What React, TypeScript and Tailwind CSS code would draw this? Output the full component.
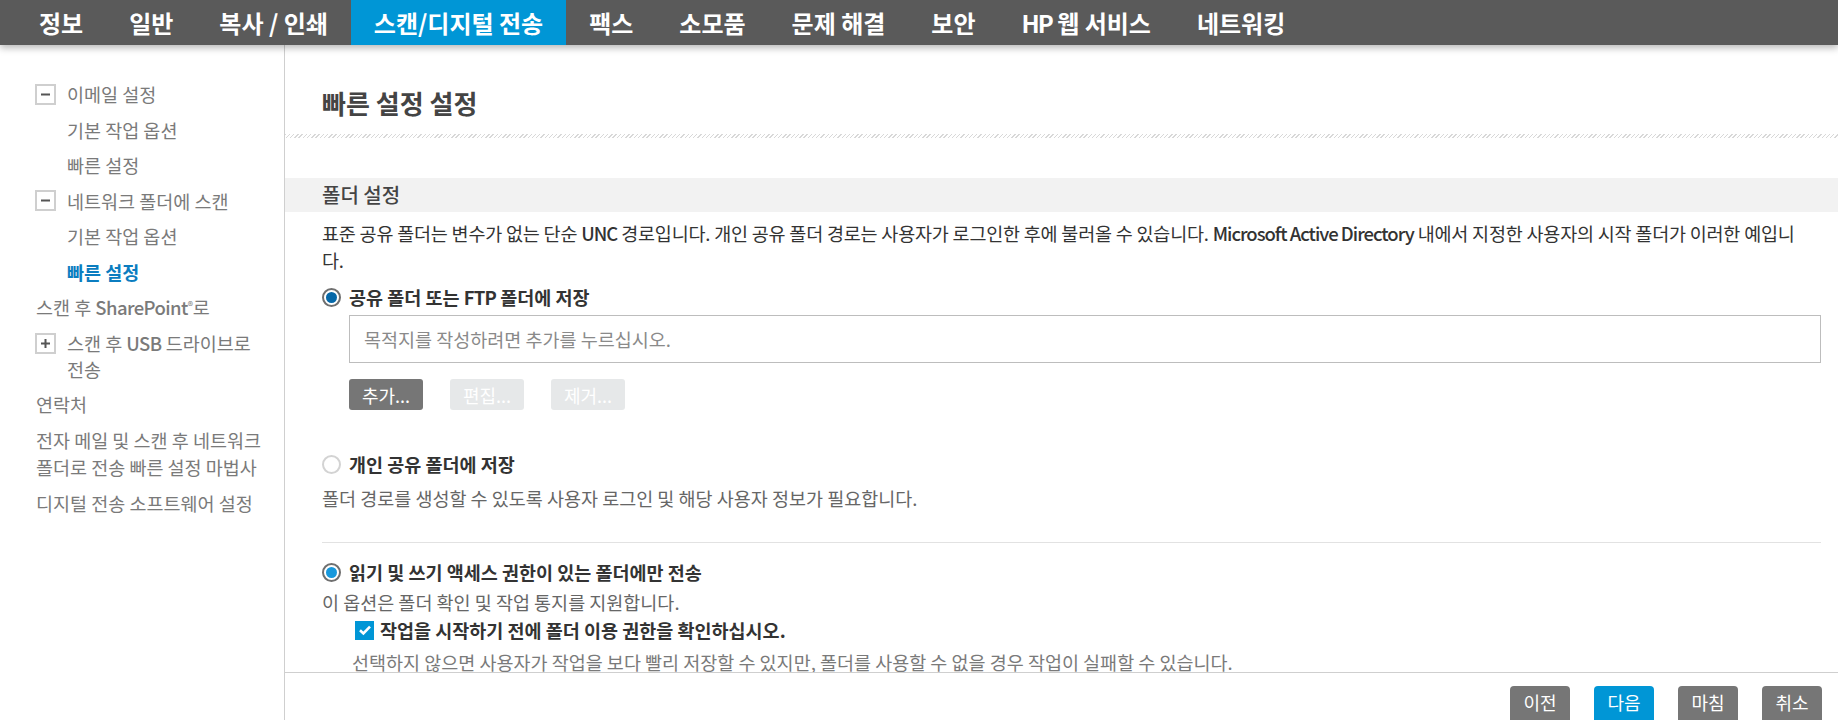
const navTabs = [
  "정보",
  "일반",
  "복사 / 인쇄",
  "스캔/디지털 전송",
  "팩스",
  "소모품",
  "문제 해결",
  "보안",
  "HP 웹 서비스",
  "네트워킹",
]

function Box({ plus }: { plus?: boolean }) {
  return (
    <span className="flex h-[21px] w-[21px] shrink-0 items-center justify-center border-2 border-[#cfcfcf] bg-white">
      <svg width="11" height="11" viewBox="0 0 11 11">
        <rect x="1" y="4.5" width="9" height="2" fill="#555" />
        {plus && <rect x="4.5" y="1" width="2" height="9" fill="#555" />}
      </svg>
    </span>
  )
}

function Radio({ checked, dot }: { checked?: boolean; dot?: string }) {
  if (!checked) {
    return <span className="h-[19px] w-[19px] shrink-0 rounded-full border-2 border-[#d3d3d3] bg-white" />
  }
  return (
    <span className="flex h-[19px] w-[19px] shrink-0 items-center justify-center rounded-full border-2 border-[#6f6f6f] bg-white">
      <span className={"h-[11px] w-[11px] rounded-full " + dot} />
    </span>
  )
}

function Sidebar() {
  return (
    <aside className="flex w-[285px] shrink-0 flex-col gap-[9.5px] border-r border-[#cfcfcf] pt-[36px] pl-[35px] pr-[12px] text-[18.5px] leading-[26px] break-keep text-[#7a7a7a]">
      <div className="flex items-center gap-[11px]">
        <Box />
        <span>이메일 설정</span>
      </div>
      <div className="pl-[32px]">기본 작업 옵션</div>
      <div className="pl-[32px]">빠른 설정</div>
      <div className="flex items-center gap-[11px]">
        <Box />
        <span>네트워크 폴더에 스캔</span>
      </div>
      <div className="pl-[32px]">기본 작업 옵션</div>
      <div className="pl-[32px] font-bold text-[#0b7dc0]">빠른 설정</div>
      <div className="pl-[1px]">
        스캔 후 <span className="font-medium tracking-[-0.6px]">SharePoint</span>
        <span className="align-[5px] text-[11px] leading-none">®</span>로
      </div>
      <div className="flex items-start gap-[11px]">
        <span className="pt-[3px]">
          <Box plus />
        </span>
        <span>
          스캔 후 <span className="font-medium tracking-[-0.6px]">USB</span> 드라이브로 전송
        </span>
      </div>
      <div className="pl-[1px]">연락처</div>
      <div className="pl-[1px] leading-[27px]">전자 메일 및 스캔 후 네트워크 폴더로 전송 빠른 설정 마법사</div>
      <div className="pl-[1px]">디지털 전송 소프트웨어 설정</div>
    </aside>
  )
}

function Main() {
  return (
    <main className="flex min-w-0 flex-1 flex-col">
      <div className="min-h-0 flex-1 overflow-hidden">
        <h1 className="pt-[42px] pl-[37px] text-[26px] font-bold leading-[32px] text-[#444]">빠른 설정 설정</h1>
        <div className="mt-[15px] h-[4px] bg-[repeating-linear-gradient(135deg,#d8d8d8_0px,#d8d8d8_1px,transparent_1px,transparent_3px)]" />
        <div className="mt-[40px] flex h-[34px] items-center bg-[#f2f2f2] pl-[37px] text-[20px] font-medium text-[#444]">
          폴더 설정
        </div>
        <div className="pl-[37px] pr-[17px] text-[18.5px] leading-[26px]">
          <p className="mt-[8px] mr-[12px] leading-[27px] tracking-[-0.2px] text-[#333]">
            표준 공유 폴더는 변수가 없는 단순 <span className="font-medium tracking-[-1px]">UNC</span> 경로입니다. 개인 공유
            폴더 경로는 사용자가 로그인한 후에 불러올 수 있습니다.{" "}
            <span className="font-medium tracking-[-1px]">Microsoft Active Directory</span> 내에서 지정한 사용자의 시작
            폴더가 이러한 예입니다.
          </p>
          <label className="mt-[10px] flex items-center gap-[8px] font-bold text-[#333]">
            <Radio checked dot="bg-[#0668a8]" />
            <span>
              공유 폴더 또는 <span className="tracking-[-0.8px]">FTP</span> 폴더에 저장
            </span>
          </label>
          <div className="mt-[5px] ml-[27px] flex h-[48px] items-center border border-[#bdbdbd] pl-[14px] text-[#8a8a8a]">
            목적지를 작성하려면 추가를 누르십시오.
          </div>
          <div className="mt-[16px] ml-[27px] flex gap-[27px] text-[18px]">
            <button className="flex h-[31px] w-[74px] items-center justify-center rounded-[3px] bg-[#767676] text-white">
              추가...
            </button>
            <button className="flex h-[31px] w-[74px] items-center justify-center rounded-[3px] bg-[#e6e8e9] text-white">
              편집...
            </button>
            <button className="flex h-[31px] w-[74px] items-center justify-center rounded-[3px] bg-[#e6e8e9] text-white">
              제거...
            </button>
          </div>
          <label className="mt-[41px] flex items-center gap-[8px] font-bold text-[#333]">
            <Radio />
            <span>개인 공유 폴더에 저장</span>
          </label>
          <p className="mt-[8px] text-[#666]">폴더 경로를 생성할 수 있도록 사용자 로그인 및 해당 사용자 정보가 필요합니다.</p>
          <div className="mt-[31px] h-px bg-[#e2e2e2]" />
          <label className="mt-[16px] flex items-center gap-[8px] font-bold text-[#333]">
            <Radio checked dot="bg-[#1798dc]" />
            <span>읽기 및 쓰기 액세스 권한이 있는 폴더에만 전송</span>
          </label>
          <p className="mt-[4px] text-[#666]">이 옵션은 폴더 확인 및 작업 통지를 지원합니다.</p>
          <label className="mt-[2px] ml-[33px] flex items-center gap-[6px] font-bold text-[#333]">
            <span className="flex h-[19px] w-[19px] shrink-0 items-center justify-center bg-[#0096d6]">
              <svg width="14" height="14" viewBox="0 0 14 14">
                <path d="M2 7.2 L5.4 10.4 L12 3.6" fill="none" stroke="#fff" strokeWidth="2.6" />
              </svg>
            </span>
            <span>작업을 시작하기 전에 폴더 이용 권한을 확인하십시오.</span>
          </label>
          <p className="mt-[6px] pl-[30px] text-[#7a7a7a]">
            선택하지 않으면 사용자가 작업을 보다 빨리 저장할 수 있지만, 폴더를 사용할 수 없을 경우 작업이 실패할 수 있습니다.
          </p>
        </div>
      </div>
      <footer className="flex h-[48px] shrink-0 justify-end gap-[24px] overflow-hidden border-t border-[#cfcfcf] pt-[13px] pr-[16px] text-[18px] text-white">
        <button className="h-[36px] w-[60px] shrink-0 rounded-t-[4px] bg-[#767676] pb-[4px]">이전</button>
        <button className="h-[36px] w-[60px] shrink-0 rounded-t-[4px] bg-[#0096d6] pb-[4px]">다음</button>
        <button className="h-[36px] w-[60px] shrink-0 rounded-t-[4px] bg-[#767676] pb-[4px]">마침</button>
        <button className="h-[36px] w-[60px] shrink-0 rounded-t-[4px] bg-[#767676] pb-[4px]">취소</button>
      </footer>
    </main>
  )
}

export default function App() {
  return (
    <div className="flex h-screen flex-col overflow-hidden bg-white font-['Noto_Sans_CJK_KR','Noto_Sans',sans-serif]">
      <nav className="relative z-10 flex h-[45px] shrink-0 bg-[#5a5a5a] pl-[16px] shadow-[0_3px_7px_rgba(0,0,0,0.28)]">
        {navTabs.map((t) => (
          <div
            key={t}
            className={
              t === "스캔/디지털 전송"
                ? "flex items-center bg-[#0096d6] px-[23px] text-[24px] font-bold text-white"
                : "flex items-center px-[23px] text-[24px] font-bold text-white"
            }
          >
            {t === "HP 웹 서비스" ? (
              <span>
                <span className="tracking-[-2px]">HP</span> 웹 서비스
              </span>
            ) : (
              t
            )}
          </div>
        ))}
      </nav>
      <div className="flex min-h-0 flex-1">
        <Sidebar />
        <Main />
      </div>
    </div>
  )
}
